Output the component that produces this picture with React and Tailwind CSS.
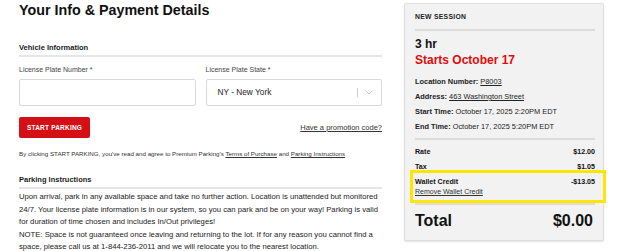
import React from "react";

const F = { fontFamily: '"Liberation Sans", Arial, sans-serif' };

export default function App() {
  return (
    <div className="w-[618px] h-[251px] bg-white overflow-hidden text-[#1a1a1a]" style={F}>
      <div className="flex">
        {/* Left column */}
        <div className="ml-[19px] w-[363px]">
          <h1 className="text-[14.3px] font-bold leading-[20px] text-[#111]">Your Info &amp; Payment Details</h1>
          <div className="mt-[23px] text-[7.5px] font-bold leading-[10px]">Vehicle Information</div>
          <div className="mt-[2px] h-[2px] bg-[#e6e6e6]" />
          <div className="grid grid-cols-2 gap-[10px] mt-[8px]">
            <div>
              <div className="text-[7px] leading-[10px] text-[#444]">License Plate Number *</div>
              <div className="mt-[4px] h-[27px] border border-[#d9d9d9] rounded-[2px] bg-white" />
            </div>
            <div>
              <div className="text-[7px] leading-[10px] text-[#444]">License Plate State *</div>
              <div className="mt-[4px] h-[27px] border border-[#d9d9d9] rounded-[2px] bg-white flex items-center">
                <span className="ml-[11px] text-[8.3px] text-[#222]">NY - New York</span>
                <div className="ml-auto flex items-center">
                  <div className="w-px h-[9px] bg-[#cfcfcf]" />
                  <svg width="8" height="5" viewBox="0 0 8 5" className="ml-[7px] mr-[8px]">
                    <path d="M0.5 0.5 L4 4 L7.5 0.5" fill="none" stroke="#c4c4c4" strokeWidth="0.9" />
                  </svg>
                </div>
              </div>
            </div>
          </div>
          <div className="mt-[11px] flex items-center justify-between">
            <button className="w-[71px] h-[21px] bg-[#d40f16] rounded-[2px] text-white text-[6.5px] font-bold tracking-[0.2px]">START PARKING</button>
            <a className="text-[7.5px] underline text-[#333]">Have a promotion code?</a>
          </div>
          <div className="mt-[11px] text-[6.2px] leading-[10px] text-[#333]">
            By clicking START PARKING, you've read and agree to Premium Parking's <span className="underline">Terms of Purchase</span> and <span className="underline">Parking Instructions</span>
          </div>
          <div className="mt-[16px] text-[7.5px] font-bold leading-[10px] pb-[2px] border-b-2 border-[#e6e6e6]">Parking Instructions</div>
          <div className="mt-[2px] w-[370px] text-[7.7px] leading-[12.5px] text-[#222]">
            Upon arrival, park in any available space and take no further action. Location is unattended but monitored 24/7. Your license plate information is in our system, so you can park and be on your way! Parking is valid for duration of time chosen and includes In/Out privileges!
            <br />
            NOTE: Space is not guaranteed once leaving and returning to the lot. If for any reason you cannot find a space, please call us at 1-844-236-2011 and we will relocate you to the nearest location.
          </div>
        </div>

        {/* Right panel */}
        <div className="relative ml-[22px] mt-[3px] w-[200px] h-[238px] bg-[#f2f2f2] border border-[#dedede] rounded-[2px] shadow-[0_1px_2px_rgba(0,0,0,0.12)]">
          <div className="pl-[10px] pr-[8px]">
            <div className="pt-[8px] text-[6.8px] font-bold leading-[10px] tracking-[0.3px] text-[#222]">NEW SESSION</div>
            <div className="mt-[7px] h-[2px] bg-[#dcdcdc]" />
            <div className="mt-[5px] text-[12px] font-bold leading-[16px] text-[#111]">3 hr</div>
            <div className="text-[12px] font-bold leading-[16px] text-[#e00b0b]">Starts October 17</div>
            <div className="mt-[6px] text-[7.4px] leading-[15px] text-[#222]">
              <div><span className="font-bold">Location Number:</span> <span className="underline">P8003</span></div>
              <div><span className="font-bold">Address:</span> <span className="underline">463 Washington Street</span></div>
              <div><span className="font-bold">Start Time:</span> October 17, 2025 2:20PM EDT</div>
              <div><span className="font-bold">End Time:</span> October 17, 2025 5:20PM EDT</div>
            </div>
            <div className="mt-[4px] h-[2px] bg-[#dcdcdc]" />
            <div className="mt-[7px] flex justify-between text-[7.1px] font-bold leading-[10px] text-[#111]">
              <span>Rate</span><span>$12.00</span>
            </div>
            <div className="mt-[5px] flex justify-between text-[7.1px] font-bold leading-[10px] text-[#111]">
              <span>Tax</span><span>$1.05</span>
            </div>
            <div className="mt-[5px] flex justify-between text-[7.1px] font-bold leading-[10px] text-[#111]">
              <span>Wallet Credit</span><span>-$13.05</span>
            </div>
            <div className="text-[7px] leading-[10px] underline text-[#333]">Remove Wallet Credit</div>
            <div className="mt-[6px] h-[2px] bg-[#dcdcdc]" />
            <div className="mt-[6px] flex justify-between items-center text-[16px] font-bold leading-[20px] text-[#111]">
              <span>Total</span><span className="mr-[2px]">$0.00</span>
            </div>
          </div>
          <div className="absolute left-[5px] top-[166px] w-[196px] h-[33px] border-[3px] border-[#ffe600]" />
        </div>
      </div>
    </div>
  );
}
